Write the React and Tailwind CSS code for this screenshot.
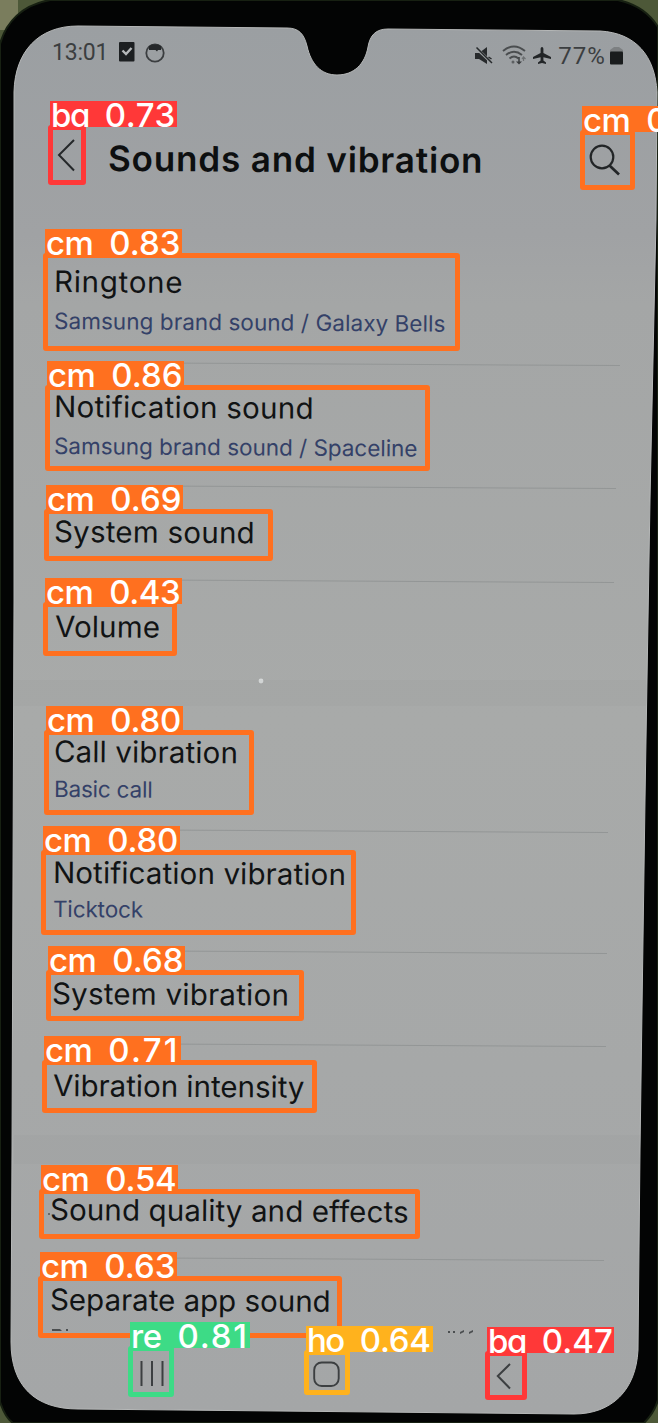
import { useLayoutEffect, useRef, useState } from "react";

// Text tracked so that its advance fills a given width.
function Fit({ text, w, className }) {
  const ref = useRef(null);
  const [tracking, setTracking] = useState(0);
  useLayoutEffect(() => {
    setTracking((w - ref.current.offsetWidth) / text.length);
  }, []);
  return (
    <span
      ref={ref}
      className={"inline-block shrink-0 whitespace-pre " + className}
      style={{ letterSpacing: tracking + "px" }}
    >
      {text}
    </span>
  );
}

function Backdrop() {
  return (
    <svg className="absolute inset-0" width="658" height="1423" viewBox="0 0 658 1423">
      <defs>
        <linearGradient id="glass" x1="0" y1="0" x2="0" y2="1">
          <stop offset="0" stopColor="#9b9fa2" />
          <stop offset="0.15" stopColor="#a0a2a4" />
          <stop offset="0.2" stopColor="#a4a6a6" />
          <stop offset="0.5" stopColor="#a8aaa9" />
          <stop offset="1" stopColor="#a4a6a7" />
        </linearGradient>
      </defs>
      <rect width="658" height="1423" fill="#4d5838" />
      <rect width="18" height="30" fill="#7a7d5d" />
      <path
        d="M0 44C6 22 22 5 50 0H618C636 4 650 14 658 27V1400C655 1410 650 1417 644 1423H13C7 1419 3 1411 0 1402Z"
        fill="#030404"
        stroke="#172012"
        strokeWidth="2"
      />
      <path
        d="M14 92C15 52 38 26 78 26L287 28C299 28 304 34 307 46C311 64 321 75 337 75C354 75 365 64 368 47C370 35 376 29 388 29L600 31C636 33 655 56 657 92L656 220L650 500L645 800L640 1150L638 1350C636 1390 612 1414 574 1414L78 1409C35 1409 11 1386 11 1342L12 1150L14 600Z"
        fill="url(#glass)"
        stroke="#b6b8b8"
        strokeWidth="1"
      />
      <circle cx="261" cy="681" r="2.4" fill="#d5d8d8" />
      <circle cx="49" cy="1214" r="1" fill="#555" />
    </svg>
  );
}

function StatusBar() {
  return (
    <div className="flex h-[76px] items-start pl-[52px] pt-[38px] text-[#3b3e40]">
      <Fit text="13:01" w={56} className="text-[23px] leading-[30px]" />
      <svg className="ml-[11px] mt-1" width="16" height="20" viewBox="0 0 16 20">
        <rect width="15.5" height="19.5" rx="1" fill="#1c1f21" />
        <path d="M3.5 8.500L7 12L12.5 6" fill="none" stroke="#b5b8ba" strokeWidth="2.4" />
      </svg>
      <svg className="ml-2.5 mt-[5px]" width="20" height="20" viewBox="0 0 20 20">
        <circle cx="10" cy="10" r="8.7" fill="none" stroke="#3b3e40" strokeWidth="1.8" />
        <path d="M4 3L7 1.5L13 1.5L16 3L16 7H13L12 8.500L10.500 7H4Z" fill="#25282a" />
      </svg>
      <div className="ml-[310px] mt-[3px] flex items-start">
        <svg className="mt-1.5" width="18" height="18" viewBox="0 0 18 18">
          <path d="M0 6H4L12 0V17L4 12H0Z" fill="#272a2c" />
          <path d="M1 1L17 16" stroke="#9da1a3" strokeWidth="3" />
          <path d="M1.500 .5L17 16" stroke="#272a2c" strokeWidth="1.500" />
          <path d="M13.500 10L16.500 12" stroke="#272a2c" strokeWidth="1.500" />
        </svg>
        <svg className="ml-[9px] mt-1" width="26" height="21" viewBox="0 0 26 21" fill="none" stroke="#4a4d4f" strokeWidth="1.900">
          <path d="M1 6Q12 -3 23 6" />
          <path d="M4 10Q12 3.500 20 10" />
          <path d="M7.500 13.500Q12 9.500 16.500 13.500" />
          <path d="M14 16.500L17 19.500L20 16.500Z" fill="#393c3e" stroke="none" />
          <path d="M17 12V18" stroke="#393c3e" strokeWidth="1.500" />
          <path d="M21.500 16V12.500M20 14L21.500 12L23.500 14" stroke="#6d7072" strokeWidth="1.200" />
          <circle cx="11" cy="17" r="1.500" fill="#5d6062" stroke="none" />
        </svg>
        <svg className="ml-[5px] mt-[6px]" width="18" height="17" viewBox="0 0 18 17">
          <path
            d="M9 0C10 0 10.400 1 10.400 2V6L18 10V12L10.400 10.200V13.500L13 15.500V17L9 16L5 17V15.500L7.600 13.500V10.200L0 12V10L7.600 6V2C7.600 1 8 0 9 0Z"
            fill="#222527"
          />
        </svg>
        <Fit text="77%" w={48} className="ml-[7px] text-[24px] leading-[30px]" />
        <svg className="ml-1 mt-[6px]" width="13" height="18" viewBox="0 0 13 18">
          <path d="M0 5V3L4 0H9L13 3V5Z" fill="#7d8082" />
          <rect y="4.500" width="13" height="13" rx="1" fill="#191c1d" />
        </svg>
      </div>
    </div>
  );
}

function Header() {
  return (
    <div className="flex h-[161px] items-start pl-[57px] pt-[59px] text-[#0d0f10]">
      <svg className="mt-1" width="19" height="33" viewBox="0 0 19 33" fill="none" stroke="#25282a" strokeWidth="2">
        <path d="M17 1L2 16L17 31.500" />
      </svg>
      <Fit text="Sounds and vibration" w={375} className="ml-[32px] origin-left rotate-[0.3deg] text-[35px] font-semibold leading-[47px] [font-family:Inter,sans-serif]" />
      <svg className="ml-[106px] mt-[9px]" width="32" height="32" viewBox="0 0 32 32" fill="none" stroke="#222527" strokeWidth="2.200">
        <circle cx="13" cy="13" r="11.300" />
        <path d="M20.500 21.500L30 30.500" strokeWidth="2.700" />
      </svg>
    </div>
  );
}

function Row({ row }) {
  return (
    <div className={"relative flex flex-col items-start [font-family:Inter,sans-serif] " + row.box}>
      <Fit text={row.label} w={row.w} className="mb-0.5 origin-left rotate-[0.4deg] text-[29.500px] leading-[38px] text-[#111314]" />
      {row.sub && (
        <Fit text={row.sub} w={row.subW} className={"origin-left rotate-[0.4deg] text-[22.500px] leading-[30px] text-[#344168] " + row.gap} />
      )}
      {row.line && <div className={"absolute bottom-0 left-[52px] h-px origin-left rotate-[0.300deg] bg-[#939696] " + row.line} />}
    </div>
  );
}

const groups = [
  [
    { label: "Ringtone", w: 129, sub: "Samsung brand sound / Galaxy Bells", subW: 392, gap: "mt-1", box: "h-[126px] pl-[54px] pt-[25px]", line: "w-[568px]" },
    { label: "Notification sound", w: 260, sub: "Samsung brand sound / Spaceline", subW: 364, gap: "mt-1", box: "h-[123px] pl-[54px] pt-[24px]", line: "w-[564px]" },
    { label: "System sound", w: 201, box: "h-[94px] pl-[54px] pt-[26px]", line: "w-[562px]" },
    { label: "Volume", w: 105, box: "h-[100px] pl-[55px] pt-[27px]" },
  ],
  [
    { label: "Call vibration", w: 184, sub: "Basic call", subW: 98, gap: "mt-0.5", box: "h-[124px] pl-[54px] pt-[26px]", line: "w-[556px]" },
    { label: "Notification vibration", w: 293, sub: "Ticktock", subW: 90, gap: "mt-px", box: "h-[121px] pl-[53px] pt-[23px]", line: "w-[555px]" },
    { label: "System vibration", w: 237, box: "h-[93px] pl-[52px] pt-[23px]", line: "w-[554px]" },
    { label: "Vibration intensity", w: 252, box: "h-[91px] pl-[53px] pt-[22px]" },
  ],
  [
    { label: "Sound quality and effects", w: 359, box: "h-[94px] pl-[50px] pt-[26px]", line: "w-[552px]" },
    { label: "Separate app sound", w: 281, box: "h-[70px] pl-[50px] pt-[22px]" },
  ],
];

function NavBar() {
  return (
    <div className="flex items-start pl-[139px] pt-[20px] text-[#3c3f41]">
      <svg className="mt-[7px]" width="26" height="26" viewBox="0 0 26 26" stroke="#3c3f41" strokeWidth="2">
        <path d="M2.500 0V25M13 0V25M23.500 0V25" />
      </svg>
      <svg className="ml-[148px] mt-[7px]" width="27" height="27" viewBox="0 0 27 27" fill="none" stroke="#3c3f41" strokeWidth="1.900">
        <rect x="1.200" y="1.500" width="24.500" height="23.500" rx="7.500" />
      </svg>
      <svg className="ml-[156px] mt-[9px]" width="16" height="27" viewBox="0 0 16 27" fill="none" stroke="#3c3f41" strokeWidth="2">
        <path d="M14 1L1.800 13L14 25.500" />
      </svg>
    </div>
  );
}

const orange = { border: "border-[#ff701f]", bg: "bg-[#ff701f]" };
const red = { border: "border-[#ff3838]", bg: "bg-[#ff3838]" };
const green = { border: "border-[#3ddb86]", bg: "bg-[#3ddb86]" };
const amber = { border: "border-[#ffb21d]", bg: "bg-[#ffb21d]" };

const words = {
  cm: { w: 47, gap: "ml-[16px]", tag: "w-[137px]" },
  ba: { w: 38, gap: "ml-[16px]", tag: "w-[127px]" },
  re: { w: 31, gap: "ml-[16px]", tag: "w-[120px]" },
  ho: { w: 37, gap: "ml-[16px]", tag: "w-[127px]" },
};

const marks = [
  { t: "ba", n: "0.73", c: red, at: "left-[48px] top-[125px] w-[38px] h-[60px]" },
  { t: "cm", n: "0.71", c: orange, at: "left-[580px] top-[130px] w-[55px] h-[60px]" },
  { t: "cm", n: "0.83", c: orange, at: "left-[43px] top-[253px] w-[417px] h-[98px]" },
  { t: "cm", n: "0.86", c: orange, at: "left-[45px] top-[385px] w-[385px] h-[86px]" },
  { t: "cm", n: "0.69", c: orange, at: "left-[44px] top-[509px] w-[229px] h-[52px]" },
  { t: "cm", n: "0.43", c: orange, at: "left-[43px] top-[602px] w-[134px] h-[54px]" },
  { t: "cm", n: "0.80", c: orange, at: "left-[44px] top-[730px] w-[210px] h-[85px]" },
  { t: "cm", n: "0.80", c: orange, at: "left-[41px] top-[850px] w-[315px] h-[85px]" },
  { t: "cm", n: "0.68", c: orange, at: "left-[46px] top-[970px] w-[258px] h-[51px]" },
  { t: "cm", n: "0.71", c: orange, at: "left-[42px] top-[1060px] w-[275px] h-[53px]" },
  { t: "cm", n: "0.54", c: orange, at: "left-[39px] top-[1189px] w-[381px] h-[50px]" },
  { t: "cm", n: "0.63", c: orange, at: "left-[38px] top-[1276px] w-[304px] h-[62px]" },
  { t: "re", n: "0.81", c: green, at: "left-[128px] top-[1346px] w-[46px] h-[51px]" },
  { t: "ho", n: "0.64", c: amber, at: "left-[304px] top-[1350px] w-[46px] h-[45px]" },
  { t: "ba", n: "0.47", c: red, at: "left-[485px] top-[1351px] w-[42px] h-[49px]" },
];

function Mark({ m }) {
  const word = words[m.t];
  return (
    <div className={"absolute rounded-[3px] border-[5px] " + m.at + " " + m.c.border}>
      <div className={"absolute -left-[3px] -top-[29px] flex h-[26px] items-center pl-px pt-px text-[33px] font-medium leading-[26px] text-white [font-family:Inter,sans-serif] [font-feature-settings:'cv11'] " + word.tag + " " + m.c.bg}>
        <Fit text={m.t} w={word.w} className="" />
        <Fit text={m.n} w={71} className={word.gap} />
      </div>
    </div>
  );
}

export default function App() {
  return (
    <div className="relative h-[1423px] w-[658px] overflow-hidden bg-[#030404] [font-family:Roboto,sans-serif]">
      <Backdrop />
      <div className="relative flex flex-col">
        <StatusBar />
        <Header />
        {groups.map((rows, i) => (
          <div key={i} className="flex flex-col">
            {i > 0 && <div className={"ml-[14px] bg-black/[0.015] " + (i === 1 ? "h-[26px] w-[632px]" : "h-[29px] w-[626px]")} />}
            {rows.map((row) => (
              <Row key={row.label} row={row} />
            ))}
          </div>
        ))}
        <div className="flex h-[6px] items-start pl-[51px]">
          <svg width="430" height="6" viewBox="0 0 430 6" fill="#4b4e50">
            <path d="M1 1H9L11 3H1ZM15 1H17V3H15ZM397 3H399V5H397ZM402 3H404V5H402ZM409 4L413 2V4L409 6ZM418 4L422 2V4L418 6Z" />
          </svg>
        </div>
        <NavBar />
      </div>
      {marks.map((m, i) => (
        <Mark key={i} m={m} />
      ))}
    </div>
  );
}
